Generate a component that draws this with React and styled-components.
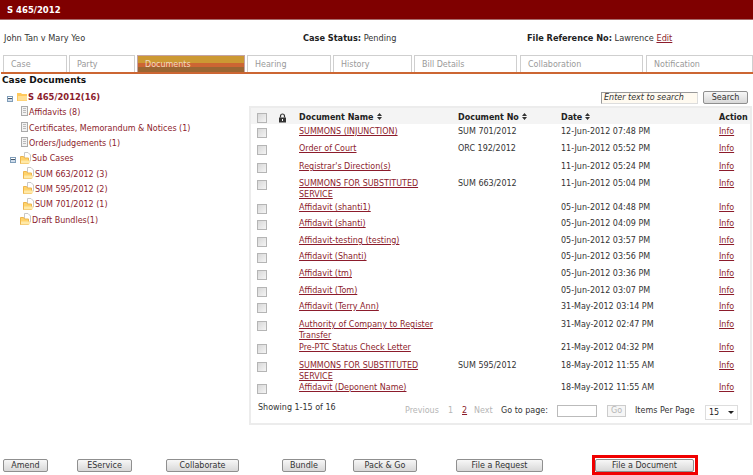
import styled, { createGlobalStyle } from "styled-components";

const tabs = [
  { label: "Case", width: 64, gap: 2 },
  { label: "Party", width: 66, gap: 2 },
  { label: "Documents", width: 108, gap: 2, active: true },
  { label: "Hearing", width: 84, gap: 2 },
  { label: "History", width: 79, gap: 2 },
  { label: "Bill Details", width: 103, gap: 3 },
  { label: "Collaboration", width: 123, gap: 3 },
  { label: "Notification", width: 107, gap: 0 },
];

const tree = [
  { label: "S 465/2012(16)", indent: 7, icon: "open", toggle: true, strong: true },
  { label: "Affidavits (8)", indent: 21, icon: "doc" },
  { label: "Certificates, Memorandum & Notices (1)", indent: 21, icon: "doc" },
  { label: "Orders/Judgements (1)", indent: 21, icon: "doc" },
  { label: "Sub Cases", indent: 10, icon: "folder", toggle: true },
  { label: "SUM 663/2012 (3)", indent: 23, icon: "folder" },
  { label: "SUM 595/2012 (2)", indent: 23, icon: "folder" },
  { label: "SUM 701/2012 (1)", indent: 23, icon: "folder" },
  { label: "Draft Bundles(1)", indent: 20, icon: "folder" },
];

const docs = [
  { name: "SUMMONS (INJUNCTION)", no: "SUM 701/2012", date: "12-Jun-2012 07:48 PM", h: 17 },
  { name: "Order of Court", no: "ORC 192/2012", date: "11-Jun-2012 05:52 PM", h: 18 },
  { name: "Registrar's Direction(s)", no: "", date: "11-Jun-2012 05:24 PM", h: 17 },
  { name: "SUMMONS FOR SUBSTITUTED SERVICE", no: "SUM 663/2012", date: "11-Jun-2012 05:04 PM", h: 24 },
  { name: "Affidavit (shanti1)", no: "", date: "05-Jun-2012 04:48 PM", h: 16 },
  { name: "Affidavit (shanti)", no: "", date: "05-Jun-2012 04:09 PM", h: 17 },
  { name: "Affidavit-testing (testing)", no: "", date: "05-Jun-2012 03:57 PM", h: 16 },
  { name: "Affidavit (Shanti)", no: "", date: "05-Jun-2012 03:56 PM", h: 17 },
  { name: "Affidavit (tm)", no: "", date: "05-Jun-2012 03:36 PM", h: 17 },
  { name: "Affidavit (Tom)", no: "", date: "05-Jun-2012 03:07 PM", h: 16 },
  { name: "Affidavit (Terry Ann)", no: "", date: "31-May-2012 03:14 PM", h: 18 },
  { name: "Authority of Company to Register Transfer", no: "", date: "31-May-2012 02:47 PM", h: 23 },
  { name: "Pre-PTC Status Check Letter", no: "", date: "21-May-2012 04:32 PM", h: 18 },
  { name: "SUMMONS FOR SUBSTITUTED SERVICE", no: "SUM 595/2012", date: "18-May-2012 11:55 AM", h: 22 },
  { name: "Affidavit (Deponent Name)", no: "", date: "18-May-2012 11:55 AM", h: 17 },
];

const actions = [
  { label: "Amend", width: 45, gap: 3 },
  { label: "EService", width: 55, gap: 29 },
  { label: "Collaborate", width: 73, gap: 34 },
  { label: "Bundle", width: 44, gap: 43 },
  { label: "Pack & Go", width: 64, gap: 27 },
  { label: "File a Request", width: 87, gap: 39 },
];

const GlobalStyle = createGlobalStyle`
  html, body {
    margin: 0;
    background: #fff;
  }
  body {
    font-family: "DejaVu Sans", Verdana, sans-serif;
    font-size: 8px;
    line-height: 11px;
    color: #333;
  }
`;

const Page = styled.div`
  width: 753px;
  height: 475px;
  overflow: hidden;
  display: flex;
  flex-direction: column;
`;

const Header = styled.header`
  height: 19px;
  background: #7f0000;
  border-bottom: 1px solid #a86a6a;
  color: #fff;
  font-size: 8.5px;
  font-weight: bold;
  line-height: 20px;
  padding-left: 7px;
`;

const InfoRow = styled.div`
  display: grid;
  grid-template-columns: 299px 224px 1fr;
  padding: 13px 0 0 4px;
  height: 22px;
  font-size: 8.2px;
`;

const Strong = styled.b`
  color: #222;
`;

const Link = styled.a`
  color: #8c1c2c;
  text-decoration: underline;
`;

const TabBar = styled.nav`
  display: flex;
  padding-left: 2px;
  margin-left: 1px;
  height: 17px;
  border-bottom: 2px solid #cc6633;
`;

const Tab = styled.div`
  box-sizing: border-box;
  width: ${(p) => p.$width}px;
  margin-right: ${(p) => p.$gap}px;
  height: 17px;
  padding-left: 7px;
  line-height: 17px;
  color: ${(p) => (p.$active ? "#f0dcc0" : "#9a9a9a")};
  border: 1px solid #cfcfcf;
  border-bottom: 0;
  ${(p) =>
    p.$active &&
    `
    border-color: #c4a4a4;
    background: linear-gradient(#cc9933 0 7px, #cc6633 7px 11px, #996633 11px);
  `}
`;

const Main = styled.main`
  display: flex;
  flex: 1;
  min-height: 0;
`;

const Side = styled.aside`
  width: 249px;
  flex: none;
`;

const SideTitle = styled.h2`
  margin: 0;
  padding: 1px 0 0 2px;
  font-size: 9px;
  line-height: 11px;
  color: #111;
`;

const TreeList = styled.ul`
  list-style: none;
  margin: 4px 0 0;
  padding: 0;
`;

const TreeRow = styled.li`
  display: flex;
  align-items: center;
  gap: 1px;
  height: 15.3px;
  padding-left: ${(p) => p.$indent}px;
  color: #8c1c2c;
  font-size: ${(p) => (p.$strong ? "8.4px" : "8px")};
  font-weight: ${(p) => (p.$strong ? "bold" : "normal")};
`;

const Toggle = styled.span`
  box-sizing: border-box;
  width: 6px;
  height: 6px;
  flex: none;
  margin-right: 3px;
  margin-top: 2px;
  border: 1px solid #7f9db9;
  background: linear-gradient(#fff 0 1.5px, #456 1.5px 2.5px, #cfdcea 2.5px);
`;

const Right = styled.section`
  flex: 1;
  min-width: 0;
  padding-top: 17px;
`;

const SearchRow = styled.div`
  display: flex;
  justify-content: flex-end;
  align-items: center;
  gap: 5px;
  padding-right: 5px;
  height: 13px;
  margin-bottom: 2px;
`;

const SearchInput = styled.div`
  box-sizing: border-box;
  width: 97px;
  height: 12px;
  margin-top: 1px;
  padding-left: 2px;
  line-height: 10px;
  font-style: italic;
  color: #333;
  background: #fffaf0;
  border: 1px solid #999;
  border-right-color: #ddd;
  border-bottom-color: #ddd;
`;

const Button = styled.button`
  box-sizing: border-box;
  flex: none;
  width: ${(p) => p.$width}px;
  height: 13px;
  padding: 0;
  font: 8px/9px "DejaVu Sans", Verdana, sans-serif;
  color: #333;
  background: linear-gradient(#f7f7f7, #d8d8d8);
  border: 1px solid #8f8f8f;
  border-radius: 2px;
`;

const Panel = styled.div`
  box-sizing: border-box;
  height: 319px;
  margin-right: 1px;
  border: 2px solid #ececec;
  display: flex;
  flex-direction: column;
`;

const columns = "grid-template-columns: 27px 21px 159px 103px 158px 1fr;";

const HeadRow = styled.div`
  display: grid;
  ${columns}
  align-items: center;
  box-sizing: border-box;
  height: 16px;
  padding-top: 3px;
  background: #f4f4f4;
  font-weight: bold;
  color: #222;
`;

const DocRow = styled.div`
  display: grid;
  ${columns}
  box-sizing: border-box;
  height: ${(p) => p.$height}px;
  padding-top: 2px;
`;

const NameCell = styled.span`
  width: 136px;
`;

const Check = styled.span`
  display: block;
  box-sizing: border-box;
  width: 10px;
  height: 10px;
  margin: 2px 0 0 6px;
  border: 1px solid #b5b5b5;
  background: linear-gradient(135deg, #d8d8d8, #f4f4f4);
`;

const HeadCheck = styled(Check)`
  margin-top: 0;
`;

const Pager = styled.div`
  display: flex;
  align-items: center;
  flex: 1;
  padding-left: 7px;
  white-space: nowrap;
`;

const Showing = styled.span`
  width: 147px;
  flex: none;
  margin-top: -6px;
`;

const PagerItem = styled.span`
  flex: none;
  color: ${(p) => (p.$muted ? "#b5b5b5" : "#333")};
  width: ${(p) => p.$width}px;
`;

const PagerLink = styled(Link)`
  flex: none;
  width: 12px;
`;

const PageInput = styled.span`
  box-sizing: border-box;
  flex: none;
  width: 40px;
  height: 12px;
  margin: 2px 10px 0 0;
  border: 1px solid #bbb;
`;

const GoButton = styled.span`
  box-sizing: border-box;
  flex: none;
  width: 19px;
  height: 12px;
  margin: 2px 9px 0 0;
  text-align: center;
  line-height: 10px;
  color: #b5b5b5;
  border: 1px solid #ccc;
  background: #f6f6f6;
`;

const PerPage = styled.span`
  box-sizing: border-box;
  flex: none;
  display: flex;
  justify-content: space-between;
  align-items: center;
  width: 33px;
  height: 15px;
  margin-top: 5px;
  padding: 0 3px;
  border: 1px solid #ddd;
  color: #222;
`;

const Arrow = styled.i`
  width: 0;
  height: 0;
  border: 3px solid transparent;
  border-top: 3px solid #222;
  border-bottom: 0;
`;

const Footer = styled.footer`
  display: flex;
  align-items: center;
  flex: none;
  height: 20px;
`;

const ActionButton = styled(Button)`
  margin: 1px 0 0 ${(p) => p.$gap}px;
`;

const Highlight = styled.div`
  box-sizing: border-box;
  display: flex;
  align-items: flex-end;
  height: 20px;
  margin-left: 49px;
  padding-right: 1px;
  border: 3px solid #f00000;
`;

const SortIcon = () => (
  <svg width="5" height="7" viewBox="0 0 5 7" style={{ marginLeft: 3 }}>
    <path d="M2.5 0 5 3H0zM2.5 7 0 4h5z" fill="#333" />
  </svg>
);

const FolderIcon = ({ open }) =>
  open ? (
    <svg width="10" height="9" viewBox="0 0 10 9" style={{ flex: "none", marginTop: -3 }}>
      <path d="M0 1h4l1 1h5v7H0z" fill="#ffc95c" />
      <path d="M1 4h9v4.500H1z" fill="#ffdf95" />
    </svg>
  ) : (
    <svg width="11" height="12" viewBox="0 0 11 12" style={{ flex: "none", marginTop: -2 }}>
      <path d="M4.500 0.500h3.500l2.500 2.500v6h-6z" fill="#fff" stroke="#c8c8c8" />
      <path d="M0.500 4.500h3l1 1.500h4v5.500h-8z" fill="#ffd36b" stroke="#edb54c" />
      <path d="M1 8.500h9.500l-1 3h-8.500z" fill="#ffe9a8" />
    </svg>
  );

const DocIcon = () => (
  <svg width="7" height="10" viewBox="0 0 7 10" style={{ flex: "none", marginTop: -3 }}>
    <rect x="0.500" y="0.500" width="6" height="9" fill="#f2f2f2" stroke="#aaa" />
    <path d="M2 2.500h3M2 4.500h3M2 6.500h3" stroke="#bbb" />
  </svg>
);

const LockIcon = () => (
  <svg width="9" height="10" viewBox="0 0 9 10">
    <path d="M2.500 4.500V3a2 2 0 0 1 4 0v1.500" fill="none" stroke="#333" strokeWidth="1.200" />
    <rect x="1" y="4.500" width="7" height="5" fill="#333" />
    <rect x="4" y="6" width="1" height="2" fill="#fff" />
  </svg>
);

const App = () => {
  return (
    <Page>
      <GlobalStyle />
      <Header>S 465/2012</Header>
      <InfoRow>
        <span>John Tan v Mary Yeo</span>
        <span>
          <Strong>Case Status:</Strong> Pending
        </span>
        <span>
          <Strong>File Reference No:</Strong> Lawrence <Link>Edit</Link>
        </span>
      </InfoRow>
      <TabBar>
        {tabs.map((t) => (
          <Tab key={t.label} $width={t.width} $gap={t.gap} $active={t.active}>
            {t.label}
          </Tab>
        ))}
      </TabBar>
      <Main>
        <Side>
          <SideTitle>Case Documents</SideTitle>
          <TreeList>
            {tree.map((n) => (
              <TreeRow key={n.label} $indent={n.indent} $strong={n.strong}>
                {n.toggle && <Toggle />}
                {n.icon === "doc" ? <DocIcon /> : <FolderIcon open={n.icon === "open"} />}
                {n.label}
              </TreeRow>
            ))}
          </TreeList>
        </Side>
        <Right>
          <SearchRow>
            <SearchInput>Enter text to search</SearchInput>
            <Button $width={45}>Search</Button>
          </SearchRow>
          <Panel>
            <HeadRow>
              <HeadCheck />
              <LockIcon />
              <span>
                Document Name
                <SortIcon />
              </span>
              <span>
                Document No
                <SortIcon />
              </span>
              <span>
                Date
                <SortIcon />
              </span>
              <span>Action</span>
            </HeadRow>
            {docs.map((d, i) => (
              <DocRow key={i} $height={d.h}>
                <Check />
                <span />
                <NameCell>
                  <Link>{d.name}</Link>
                </NameCell>
                <span>{d.no}</span>
                <span>{d.date}</span>
                <span>
                  <Link>Info</Link>
                </span>
              </DocRow>
            ))}
            <Pager>
              <Showing>Showing 1-15 of 16</Showing>
              <PagerItem $muted $width={43}>Previous</PagerItem>
              <PagerItem $muted $width={14}>1</PagerItem>
              <PagerLink>2</PagerLink>
              <PagerItem $muted $width={27}>Next</PagerItem>
              <PagerItem $width={56}>Go to page:</PagerItem>
              <PageInput />
              <GoButton>Go</GoButton>
              <PagerItem $width={70}>Items Per Page</PagerItem>
              <PerPage>
                15
                <Arrow />
              </PerPage>
            </Pager>
          </Panel>
        </Right>
      </Main>
      <Footer>
        {actions.map((a) => (
          <ActionButton key={a.label} $width={a.width} $gap={a.gap}>
            {a.label}
          </ActionButton>
        ))}
        <Highlight>
          <Button $width={99}>File a Document</Button>
        </Highlight>
      </Footer>
    </Page>
  );
};

export default App;
